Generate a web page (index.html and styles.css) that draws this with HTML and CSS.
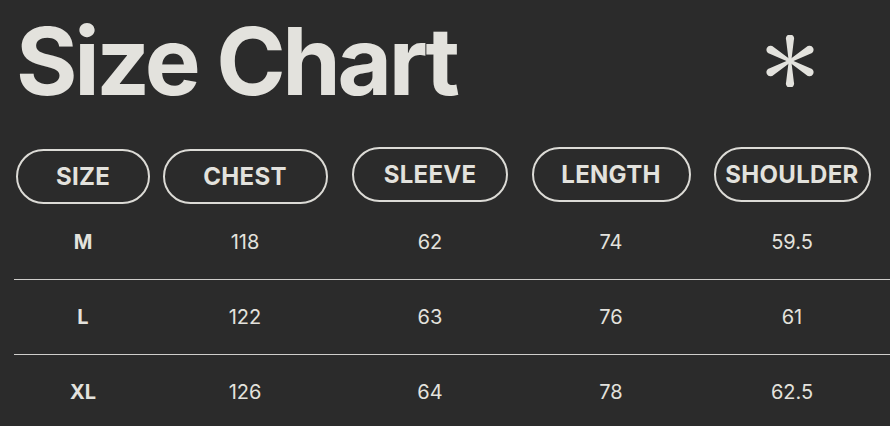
FILE: index.html
```html
<!DOCTYPE html>
<html lang="en">
<head>
<meta charset="utf-8">
<title>Size Chart</title>
<link rel="stylesheet" href="styles.css">
</head>
<body>
<main class="page">
  <header class="header">
    <h1 class="title">Size Chart</h1>
    <svg class="star" viewBox="-24 -26 48 52" width="48" height="52" aria-hidden="true">
      <g fill="currentColor">
        <path id="arm" d="M -1.3 0 L -3.9 -21.2 A 4.1 4.1 0 1 1 3.9 -21.2 L 1.3 0 Z"/>
        <use href="#arm" transform="rotate(60)"/>
        <use href="#arm" transform="rotate(120)"/>
        <use href="#arm" transform="rotate(180)"/>
        <use href="#arm" transform="rotate(240)"/>
        <use href="#arm" transform="rotate(300)"/>
      </g>
    </svg>
  </header>
  <div class="chart">
    <div class="row head">
      <div class="cell"><span class="pill p1 low">SIZE</span></div>
      <div class="cell"><span class="pill p2 low">CHEST</span></div>
      <div class="cell"><span class="pill p3">SLEEVE</span></div>
      <div class="cell"><span class="pill p4">LENGTH</span></div>
      <div class="cell"><span class="pill p5">SHOULDER</span></div>
    </div>
    <div class="row data">
      <div class="cell size">M</div>
      <div class="cell">118</div>
      <div class="cell">62</div>
      <div class="cell">74</div>
      <div class="cell">59.5</div>
    </div>
    <div class="row data">
      <div class="cell size">L</div>
      <div class="cell">122</div>
      <div class="cell">63</div>
      <div class="cell">76</div>
      <div class="cell">61</div>
    </div>
    <div class="row data last">
      <div class="cell size">XL</div>
      <div class="cell">126</div>
      <div class="cell">64</div>
      <div class="cell">78</div>
      <div class="cell">62.5</div>
    </div>
  </div>
</main>
</body>
</html>
```
FILE: styles.css
```css
html, body {
  margin: 0;
  padding: 0;
  background: #2b2b2b;
  overflow: hidden;
}
body {
  color: #e3e2dd;
  font-family: Inter, "Noto Sans", "Liberation Sans", sans-serif;
}
.page {
  padding: 14px 0 0 14px;
}
.header {
  display: flex;
  align-items: center;
  justify-content: space-between;
  padding-right: 76px;
  height: 94px;
}
.title {
  margin: 0;
  font-size: 94px;
  line-height: 94px;
  font-weight: 700;
  letter-spacing: -3.4px;
  padding-left: 2px;
}
.star {
  display: block;
  color: #e3e2dd;
}
.chart {
  margin-top: 39px;
}
.row {
  display: grid;
  grid-template-columns: 138px 186px 184px 178px 184px;
  align-items: center;
}
.head {
  height: 58px;
  align-items: start;
}
.head .cell {
  display: flex;
  justify-content: center;
}
.pill {
  box-sizing: border-box;
  display: flex;
  align-items: center;
  justify-content: center;
  height: 55px;
  border: 2px solid #dcdbd6;
  border-radius: 28px;
  font-size: 24px;
  font-weight: 700;
  letter-spacing: 0.3px;
  white-space: nowrap;
}
.pill.low { margin-top: 2px; }
.p1 { width: 134px; }
.p2 { width: 165px; }
.p3 { width: 156px; }
.p4 { width: 159px; }
.p5 { width: 157px; }
.data {
  height: 74px;
  border-bottom: 1px solid #cfcecb;
  font-size: 20px;
  text-align: center;
}
.data.last {
  border-bottom: none;
}
.size {
  font-weight: 700;
}
```
